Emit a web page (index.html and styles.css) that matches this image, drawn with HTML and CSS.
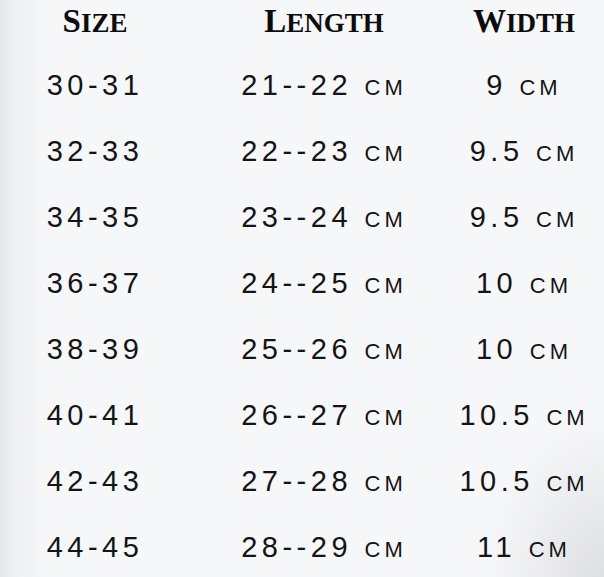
FILE: index.html
```html
<!DOCTYPE html>
<html>
<head>
<meta charset="utf-8">
<link rel="stylesheet" href="styles.css">
</head>
<body>
<div class="chart">
  <div class="head">
    <div class="hcell"><span class="big">S</span>ize</div>
    <div class="hcell"><span class="big">L</span>ength</div>
    <div class="hcell"><span class="big">W</span>idth</div>
  </div>
  <div class="row"><div class="cell">30-31</div><div class="cell">21--22 <span class="u">cm</span></div><div class="cell">9 <span class="u">cm</span></div></div>
  <div class="row"><div class="cell">32-33</div><div class="cell">22--23 <span class="u">cm</span></div><div class="cell">9.5 <span class="u">cm</span></div></div>
  <div class="row"><div class="cell">34-35</div><div class="cell">23--24 <span class="u">cm</span></div><div class="cell">9.5 <span class="u">cm</span></div></div>
  <div class="row"><div class="cell">36-37</div><div class="cell">24--25 <span class="u">cm</span></div><div class="cell">10 <span class="u">cm</span></div></div>
  <div class="row"><div class="cell">38-39</div><div class="cell">25--26 <span class="u">cm</span></div><div class="cell">10 <span class="u">cm</span></div></div>
  <div class="row"><div class="cell">40-41</div><div class="cell">26--27 <span class="u">cm</span></div><div class="cell">10.5 <span class="u">cm</span></div></div>
  <div class="row"><div class="cell">42-43</div><div class="cell">27--28 <span class="u">cm</span></div><div class="cell">10.5 <span class="u">cm</span></div></div>
  <div class="row"><div class="cell">44-45</div><div class="cell">28--29 <span class="u">cm</span></div><div class="cell">11 <span class="u">cm</span></div></div>
</div>
</body>
</html>
```

FILE: styles.css
```css
html, body {
  margin: 0;
  padding: 0;
  width: 604px;
  height: 577px;
  overflow: hidden;
}
body {
  background:
    radial-gradient(ellipse 120px 160px at 100% 100%, rgba(200,204,208,0.55), rgba(200,204,208,0) 100%),
    linear-gradient(to right, #e4e7ea 0px, #eef0f3 14px, rgba(246,247,249,0) 45px),
    #f6f7f9;
  color: #111;
}
.chart {
  display: flex;
  flex-direction: column;
  padding-top: 1px;
}
.head, .row {
  display: grid;
  grid-template-columns: 190px 268px 132px;
  justify-items: center;
}
.head {
  font-family: "Liberation Serif", "DejaVu Serif", serif;
  font-weight: bold;
  font-size: 27px;
  text-transform: uppercase;
  line-height: 40px;
  height: 42px;
  margin-bottom: 9px;
  color: #0c0c0c;
}
.hcell { white-space: nowrap; }
.big { font-size: 33px; }
.row {
  font-family: "Liberation Sans", Arial, sans-serif;
  font-size: 29px;
  line-height: 66px;
  height: 66px;
  letter-spacing: 4.5px;
  color: #141414;
}
.cell { white-space: nowrap; }
.u {
  font-size: 22px;
  text-transform: uppercase;
  letter-spacing: 4px;
}
```
